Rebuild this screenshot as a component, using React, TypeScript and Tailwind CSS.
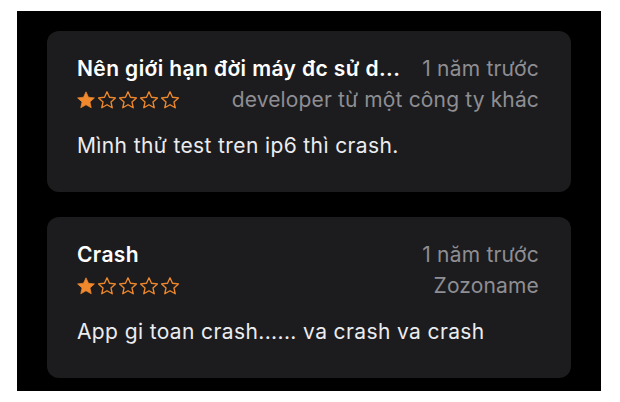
import React from "react";

const Star = ({ filled }: { filled: boolean }) => (
  <svg width="18" height="18" viewBox="2 2 20 20" className="shrink-0">
    <path
      d="M12 2.9l2.75 6.05 6.6.7-4.95 4.45 1.4 6.5L12 17.3l-5.8 3.3 1.4-6.5L2.65 9.65l6.6-.7z"
      fill={filled ? "#f0892d" : "none"}
      stroke="#f0892d"
      strokeWidth={filled ? 0.8 : 1.5}
      strokeLinejoin="round"
    />
  </svg>
);

const Stars = ({ n }: { n: number }) => (
  <div className="flex items-center gap-[3px]">
    {[0, 1, 2, 3, 4].map((i) => (
      <Star key={i} filled={i < n} />
    ))}
  </div>
);

const Card = ({
  title,
  date,
  author,
  body,
}: {
  title: string;
  date: string;
  author: string;
  body: string;
}) => (
  <div className="bg-[#1c1c1e] rounded-[12px] h-[161px] pl-[30px] pr-[32px] pt-[25px] text-[21px]">
    <div className="flex items-center justify-between gap-[18px] h-[26px] leading-[26px]">
      <div className="text-white font-semibold truncate min-w-0 tracking-[0.4px]">{title}</div>
      <div className="text-[#8e8e93] shrink-0 tracking-[0.2px]">{date}</div>
    </div>
    <div className="flex items-center justify-between mt-[5px] h-[26px] leading-[26px]">
      <Stars n={1} />
      <div className="text-[#8e8e93] tracking-[0.15px]">{author}</div>
    </div>
    <div className="mt-[20px] h-[26px] leading-[26px] text-[#ececf0] tracking-[0.38px]">{body}</div>
  </div>
);

export default function App() {
  return (
    <div
      className="w-[620px] h-[402px] bg-white pt-[11px] pl-[17px]"
      style={{ fontFamily: "Inter, 'Noto Sans', sans-serif" }}
    >
      <div className="w-[584px] h-[380px] bg-black px-[30px] pt-[20px] flex flex-col gap-[25px]">
        <Card
          title="Nên giới hạn đời máy đc sử d..."
          date="1 năm trước"
          author="developer từ một công ty khác"
          body="Mình thử test tren ip6 thì crash."
        />
        <Card
          title="Crash"
          date="1 năm trước"
          author="Zozoname"
          body="App gi toan crash...... va crash va crash"
        />
      </div>
    </div>
  );
}
